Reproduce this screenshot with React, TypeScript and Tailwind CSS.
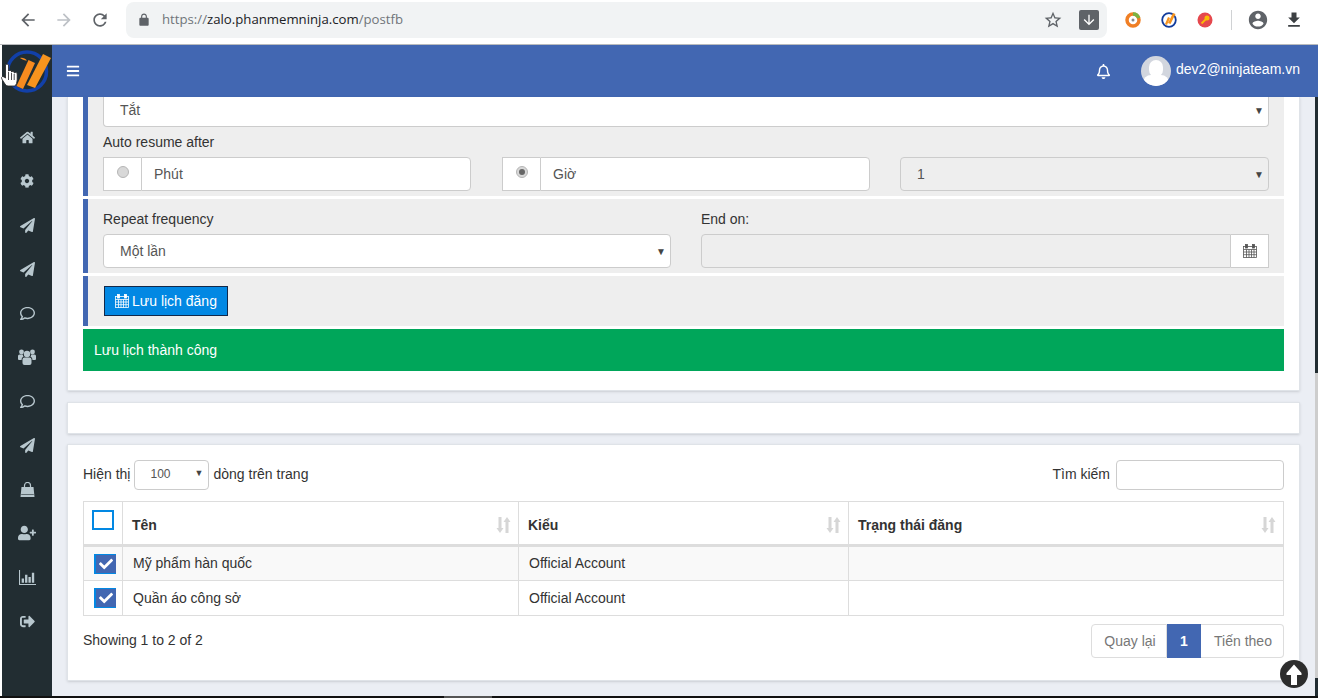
import { FaBars, FaCheck, FaCog, FaHome, FaPaperPlane, FaRegBell, FaRegComment, FaSignOutAlt, FaUserPlus } from "react-icons/fa";

function ChromeIcon({ d, className }: { d: string; className: string }) {
  return (
    <svg viewBox="0 0 24 24" className={className} fill="currentColor">
      <path d={d} />
    </svg>
  );
}

function CalendarIcon({ className }: { className: string }) {
  return (
    <svg viewBox="0 0 14 14" className={className} fill="none" stroke="currentColor" strokeWidth="0.8">
      <rect x="0.5" y="2.5" width="13" height="11" />
      <path d="M0.5 5.5h13M0.5 8h13M0.5 10.7h13M3.5 5.5v8M6 5.5v8M8.500 5.5v8M11 5.5v8" />
      <rect x="2.5" y="0.5" width="2" height="3.5" fill="currentColor" />
      <rect x="9.5" y="0.5" width="2" height="3.5" fill="currentColor" />
    </svg>
  );
}

function BarChartIcon() {
  return (
    <svg viewBox="0 0 16 14" className="w-[17px] h-[15px]" fill="currentColor">
      <path d="M0 0h1v13h15v1H0z" />
      <path d="M2.500 8h2.200v4H2.500zM5.700 4.500h2.200V12H5.700zM8.900 6.500h2.200V12H8.900zM12.100 2.500h2.200V12h-2.200z" />
    </svg>
  );
}

function UsersIcon() {
  return (
    <svg viewBox="0 0 18 16" className="w-[18px] h-[16px]" fill="currentColor">
      <circle cx="9" cy="5" r="3.200" />
      <path d="M4.500 10.500Q4.500 8.500 6.500 8.500h5q2 0 2 2V14q0 2-2 2h-5q-2 0-2-2z" />
      <circle cx="3.500" cy="3" r="2.400" />
      <circle cx="14.500" cy="3" r="2.400" />
      <path d="M0 7q0-1.500 1.500-1.500h3.300Q5 7 5.500 7.700 3.500 8.300 3.500 11H1q-1 0-1-1zM18 7q0-1.500-1.500-1.500h-3.300Q13 7 12.500 7.700q2 .6 2 3.300H17q1 0 1-1z" />
    </svg>
  );
}

function BagIcon() {
  return (
    <svg viewBox="0 0 15 15" className="w-[15px] h-[15px]">
      <path d="M1.500 5h12l1 10H.5z" fill="currentColor" />
      <path d="M4.500 7V3.500a3 3 0 0 1 6 0V7" fill="none" stroke="currentColor" strokeWidth="1.200" />
      <path d="M1.200 12.500h12.600" stroke="#222d32" strokeWidth="0.6" />
    </svg>
  );
}

function SortIcon() {
  return (
    <svg viewBox="0 0 15 16" className="w-[15px] h-[16px] text-[#d6d6d6]" fill="currentColor">
      <path d="M2.500 0h3v11h2L4 16 .5 11h2z" />
      <path d="M9.500 16h3V5h2L11 0 7.500 5h2z" />
    </svg>
  );
}

function Logo() {
  return (
    <svg viewBox="0 0 46 46" className="w-[46px] h-[46px]">
      <circle cx="22" cy="22.500" r="19.500" fill="#1f2d33" stroke="#1240a8" strokeWidth="3.500" />
      <path d="M23.500 11l6.500 3-12 26-6.500-3z" fill="#f68b1f" />
      <path d="M38 5l8 4-16 30-8-3z" fill="#f7941e" />
      <path d="M15 9c3-.5 5 .5 7 2.500-2 0-4-.5-7-2.500z" fill="#f68b1f" />
    </svg>
  );
}

function HandCursor() {
  return (
    <svg viewBox="0 0 17 24" className="w-[17px] h-[24px]">
      <path
        d="M4.500 2Q6 0 7.500 2V8Q9 6.500 10.500 8V9Q12 7.500 13.200 9V10Q15 8.500 16.200 10.500V17Q16 21 14 23H7Q5 23 4 21L.8 16Q0 14 1.500 13.500 3 13.500 4.500 15Z"
        fill="#fff"
        stroke="#222"
        strokeWidth="0.8"
      />
      <path d="M7.500 9v8M10.500 10v7M13.200 11v6" stroke="#222" strokeWidth="0.8" fill="none" />
    </svg>
  );
}

function ScrollTopIcon() {
  return (
    <svg viewBox="0 0 28 28" className="w-[28px] h-[28px]">
      <circle cx="14" cy="14" r="14" fill="#2d2d2d" />
      <path d="M14 4.500L21.500 13v2H17v10h-6V15H6.500v-2z" fill="#fff" />
    </svg>
  );
}

function FakeSelect({ label, disabled, className }: { label: string; disabled?: boolean; className: string }) {
  return (
    <div className={`flex items-center justify-between rounded border border-[#ccc] pl-[16px] pr-[4px] text-[14px] text-[#555] ${disabled ? "bg-[#eee]" : "bg-white"} ${className}`}>
      <span>{label}</span>
      <span className="text-[10px] text-[#444]">▼</span>
    </div>
  );
}

function RadioGroup({ label, checked }: { label: string; checked?: boolean }) {
  return (
    <div className="flex h-[34px] w-[368px]">
      <div className="w-[38px] flex justify-center pt-[8px] bg-white border border-[#ccc] border-r-0">
        <span className="w-[12px] h-[12px] rounded-full bg-[#d8d8d8] border border-[#b5b5b5] flex items-center justify-center">
          {checked && <span className="w-[6px] h-[6px] rounded-full bg-[#666]" />}
        </span>
      </div>
      <div className="flex-1 flex items-center pl-[12px] bg-white border border-[#ccc] rounded-r text-[14px] text-[#555]">{label}</div>
    </div>
  );
}

function RowCheck() {
  return (
    <span className="w-[22px] h-[20px] bg-[#4267b2] border-l-2 border-y border-[#0288e3] flex items-center justify-center text-white">
      <FaCheck className="w-[14px] h-[14px]" />
    </span>
  );
}

const sideIcons = [
  <FaHome className="w-[15px] h-[15px]" />,
  <FaCog className="w-[14px] h-[14px]" />,
  <FaPaperPlane className="w-[15px] h-[15px]" />,
  <FaPaperPlane className="w-[15px] h-[15px]" />,
  <FaRegComment className="w-[15px] h-[15px]" />,
  <UsersIcon />,
  <FaRegComment className="w-[15px] h-[15px]" />,
  <FaPaperPlane className="w-[15px] h-[15px]" />,
  <BagIcon />,
  <FaUserPlus className="w-[18px] h-[18px]" />,
  <BarChartIcon />,
  <FaSignOutAlt className="w-[15px] h-[15px]" />,
];

const rows = ["Mỹ phẩm hàn quốc", "Quần áo công sở"];

export default function App() {
  return (
    <div className="w-[1318px] h-[698px] overflow-hidden bg-white flex flex-col relative font-['Liberation_Sans',Arial,sans-serif] text-[14px] text-[#333]">
      {/* thanh trinh duyet */}
      <div className="h-[45px] shrink-0 border-b border-[#b9bbbd] flex items-start bg-white text-[#5f6368]">
        <ChromeIcon className="w-[20px] h-[20px] ml-[18px] mt-[10px]" d="M20 11H7.830l5.590-5.590L12 4l-8 8 8 8 1.410-1.410L7.830 13H20v-2z" />
        <ChromeIcon className="w-[20px] h-[20px] ml-[16px] mt-[10px] text-[#bdc1c6]" d="M12 4l-1.410 1.410L16.170 11H4v2h12.170l-5.580 5.590L12 20l8-8z" />
        <ChromeIcon className="w-[20px] h-[20px] ml-[16px] mt-[10px]" d="M17.650 6.350C16.200 4.900 14.210 4 12 4c-4.420 0-7.990 3.580-7.990 8s3.570 8 7.990 8c3.730 0 6.840-2.550 7.730-6h-2.080c-.82 2.330-3.040 4-5.650 4-3.310 0-6-2.690-6-6s2.690-6 6-6c1.660 0 3.140.69 4.220 1.780L13 11h7V4l-2.350 2.350z" />
        <div className="ml-[16px] mt-[2px] w-[981px] h-[36px] bg-[#f1f3f4] rounded-[8px] flex items-center">
          <ChromeIcon className="w-[14px] h-[14px] ml-[11px]" d="M18 8h-1V6c0-2.760-2.240-5-5-5S7 3.240 7 6v2H6c-1.100 0-2 .9-2 2v10c0 1.100.9 2 2 2h12c1.100 0 2-.9 2-2V10c0-1.100-.9-2-2-2zM9 6c0-1.660 1.340-3 3-3s3 1.340 3 3v2H9V6z" />
          <span className="ml-[11px] font-['Open_Sans',sans-serif] text-[13.2px] text-[#70757a]">
            https://<span className="text-[#202124]">zalo.phanmemninja.com</span>/postfb
          </span>
          <ChromeIcon className="w-[20px] h-[20px] ml-auto" d="M22 9.240l-7.190-.62L12 2 9.190 8.630 2 9.240l5.460 4.730L5.820 21 12 17.270 18.180 21l-1.630-7.030L22 9.240zM12 15.400l-3.760 2.270 1-4.280-3.320-2.880 4.380-.38L12 6.100l1.710 4.040 4.380.38-3.320 2.880 1 4.280L12 15.400z" />
          <div className="ml-[16px] mr-[8px] w-[20px] h-[20px] bg-[#5f6368] rounded-[2px] flex items-center justify-center text-white">
            <ChromeIcon className="w-[16px] h-[16px]" d="M20 12l-1.410-1.410L13 16.170V4h-2v12.170l-5.580-5.590L4 12l8 8z" />
          </div>
        </div>
        <svg viewBox="0 0 16 16" className="mt-[12px] ml-[18px] w-[16px] h-[16px]" fill="none">
          <circle cx="8" cy="8" r="6" stroke="#f07f25" strokeWidth="3.500" />
          <path d="M8 2a6 6 0 0 1 5.700 4" stroke="#7cb342" strokeWidth="3.500" />
          <circle cx="8" cy="8" r="1.500" fill="#8a8a8a" />
        </svg>
        <svg viewBox="0 0 16 16" className="mt-[12px] ml-[20px] w-[16px] h-[16px]">
          <circle cx="8" cy="8" r="6.800" fill="#fff" stroke="#123c9c" strokeWidth="1.800" />
          <path d="M7 5l2 1-3 7-2-1zM12 1l2.500 1-5 10-2.500-1z" fill="#f7941e" />
        </svg>
        <svg viewBox="0 0 16 16" className="mt-[12px] ml-[20px] w-[16px] h-[16px]">
          <circle cx="8" cy="8" r="7.500" fill="#e5484d" />
          <circle cx="10" cy="6" r="2.500" fill="#fbbc05" />
          <path d="M9 7l-4.500 4.500" stroke="#fbbc05" strokeWidth="1.800" />
        </svg>
        <div className="mt-[10px] ml-[18px] w-px h-[20px] bg-[#d0d2d4]" />
        <ChromeIcon className="w-[22px] h-[22px] ml-[15px] mt-[9px]" d="M12 2C6.480 2 2 6.480 2 12s4.480 10 10 10 10-4.480 10-10S17.520 2 12 2zm0 3c1.660 0 3 1.340 3 3s-1.340 3-3 3-3-1.340-3-3 1.340-3 3-3zm0 14.200c-2.500 0-4.710-1.280-6-3.220.03-1.990 4-3.080 6-3.080 1.990 0 5.970 1.090 6 3.080-1.290 1.940-3.500 3.220-6 3.220z" />
        <ChromeIcon className="w-[20px] h-[20px] ml-[15px] mt-[10px] text-[#3c4043]" d="M19 9h-4V3H9v6H5l7 7 7-7zM5 18v2h14v-2H5z" />
      </div>

      <div className="flex-1 min-h-0 flex pl-[2px]">
        {/* sidebar */}
        <aside className="w-[50px] shrink-0 bg-[#222d32] flex flex-col items-center">
          <div className="h-[70px] w-full shrink-0 pt-[4px] pl-[3px]">
            <Logo />
          </div>
          {sideIcons.map((icon, i) => (
            <div key={i} className="h-[44px] w-full shrink-0 flex items-center justify-center text-[#b8c7ce]">
              {icon}
            </div>
          ))}
        </aside>

        <div className="flex-1 min-w-0 flex flex-col">
          <header className="h-[52px] shrink-0 bg-[#4267b2] flex items-center text-white">
            <FaBars className="w-[14px] h-[14px] ml-[14px]" />
            <FaRegBell className="w-[15px] h-[15px] ml-auto" />
            <div className="ml-[30px] w-[30px] h-[30px] rounded-full bg-[#d2d6de] overflow-hidden flex flex-col items-center pt-[4px]">
              <span className="w-[14px] h-[17px] rounded-full bg-white shrink-0" />
              <span className="w-[26px] h-[12px] rounded-t-[8px] bg-white shrink-0 -mt-[2px]" />
            </div>
            <span className="ml-[5px] mr-[18px] -mt-[4px]">dev2@ninjateam.vn</span>
          </header>

          <div className="flex-1 min-h-0 flex">
            <main className="flex-1 bg-[#ebeef4] pl-[15px] pr-[15px]">
              {/* card lich dang */}
              <section className="h-[294px] bg-white border-x border-b border-[#dfe3e8] shadow-sm px-[15px]">
                <div className="h-[99px] bg-[#eee] border-l-[5px] border-[#4267b2] pl-[15px] pr-[15px]">
                  <FakeSelect label="Tắt" className="h-[30px] border-t-0 rounded-t-none pb-[2px]" />
                  <div className="h-[20px] mt-[5px] leading-[20px]">Auto resume after</div>
                  <div className="grid grid-cols-[399px_398px_369px] mt-[5px]">
                    <RadioGroup label="Phút" />
                    <RadioGroup label="Giờ" checked />
                    <FakeSelect label="1" disabled className="h-[34px]" />
                  </div>
                </div>

                <div className="h-[74px] mt-[3px] bg-[#eee] border-l-[5px] border-[#4267b2] pl-[15px] pr-[15px] grid grid-cols-2 gap-[30px]">
                  <div>
                    <div className="h-[20px] mt-[10px] mb-[5px] leading-[20px]">Repeat frequency</div>
                    <FakeSelect label="Một lần" className="h-[34px]" />
                  </div>
                  <div>
                    <div className="h-[20px] mt-[10px] mb-[5px] leading-[20px]">End on:</div>
                    <div className="flex h-[34px]">
                      <div className="flex-1 bg-[#eee] border border-[#ccc] rounded-l" />
                      <div className="w-[38px] bg-white border border-l-0 border-[#ccc] flex items-center justify-center text-[#555]">
                        <CalendarIcon className="w-[14px] h-[14px]" />
                      </div>
                    </div>
                  </div>
                </div>

                <div className="h-[50px] mt-[3px] bg-[#eee] border-l-[5px] border-[#4267b2] pl-[16px] pt-[10px]">
                  <button className="w-[124px] h-[30px] bg-[#0288e3] border border-[#12294a] text-white flex items-center justify-center gap-[3px]">
                    <CalendarIcon className="w-[14px] h-[14px]" />
                    Lưu lịch đăng
                  </button>
                </div>

                <div className="h-[42px] mt-[3px] bg-[#00a65a] text-white flex items-center pl-[11px]">Lưu lịch thành công</div>
              </section>

              <section className="h-[32px] mt-[11px] bg-white border border-[#dfe3e8] shadow-sm" />

              {/* bang tai khoan */}
              <section className="h-[237px] mt-[10px] bg-white border border-[#dfe3e8] shadow-sm px-[15px] pt-[15px]">
                <div className="flex items-center h-[30px]">
                  <span className="-mt-[2px]">Hiện thị</span>
                  <div className="ml-[4px] w-[75px] h-[30px] border border-[#ccc] rounded flex items-center justify-between pl-[15px] pr-[5px] pb-[2px] text-[12px] text-[#555]">
                    <span>100</span>
                    <span className="text-[9px] text-[#444]">▼</span>
                  </div>
                  <span className="ml-[4px] -mt-[2px]">dòng trên trang</span>
                  <span className="ml-auto -mt-[2px]">Tìm kiếm</span>
                  <div className="ml-[6px] w-[168px] h-[30px] border border-[#ccc] rounded" />
                </div>

                <table className="mt-[11px] w-[1201px] table-fixed border-collapse border border-[#ddd]">
                  <colgroup>
                    <col className="w-[39px]" />
                    <col className="w-[396px]" />
                    <col className="w-[330px]" />
                    <col />
                  </colgroup>
                  <thead>
                    <tr className="h-[44px] border-b-[3px] border-[#ddd]">
                      <th className="border-r border-[#ddd] align-top pt-[8px] pl-[8px]">
                        <span className="block w-[22px] h-[20px] border-2 border-[#0288e3]" />
                      </th>
                      {["Tên", "Kiểu", "Trạng thái đăng"].map((title, i) => (
                        <th key={title} className={`font-bold text-left pl-[9px] pr-[7px] pt-[4px] ${i < 2 ? "border-r border-[#ddd]" : ""}`}>
                          <div className="flex items-center justify-between">
                            {title}
                            <SortIcon />
                          </div>
                        </th>
                      ))}
                    </tr>
                  </thead>
                  <tbody>
                    {rows.map((name, i) => (
                      <tr key={name} className={`h-[35px] border-b border-[#ddd] ${i === 0 ? "bg-[#f9f9f9]" : "bg-white"}`}>
                        <td className="border-r border-[#ddd] pl-[10px]">
                          <RowCheck />
                        </td>
                        <td className="border-r border-[#ddd] pl-[10px]">{name}</td>
                        <td className="border-r border-[#ddd] pl-[10px]">Official Account</td>
                        <td />
                      </tr>
                    ))}
                  </tbody>
                </table>

                <div className="flex items-start justify-between mt-[8px]">
                  <span className="mt-[6px]">Showing 1 to 2 of 2</span>
                  <div className="flex h-[34px] text-[#777]">
                    <span className="w-[76px] border border-[#ddd] rounded-l flex items-center justify-center pl-[2px]">Quay lại</span>
                    <span className="w-[34px] bg-[#4267b2] text-white font-bold flex items-center justify-center">1</span>
                    <span className="w-[83px] border border-l-0 border-[#ddd] rounded-r flex items-center justify-center pl-[2px]">Tiến theo</span>
                  </div>
                </div>
              </section>
            </main>

            {/* thanh cuon doc */}
            <div className="w-[3px] shrink-0 bg-[#222d32] flex flex-col">
              <div className="h-[276px] shrink-0" />
              <div className="h-[305px] shrink-0 bg-[#cdcdcd]" />
            </div>
          </div>
        </div>
      </div>

      {/* thanh cuon ngang */}
      <div className="h-[2px] shrink-0 bg-[#111] flex">
        <div className="ml-[444px] w-[48px] bg-[#555]" />
      </div>

      {/* con tro va nut len dau trang */}
      <div className="absolute left-[1px] top-[63px]">
        <HandCursor />
      </div>
      <div className="absolute left-[1280px] top-[660px]">
        <ScrollTopIcon />
      </div>
    </div>
  );
}
